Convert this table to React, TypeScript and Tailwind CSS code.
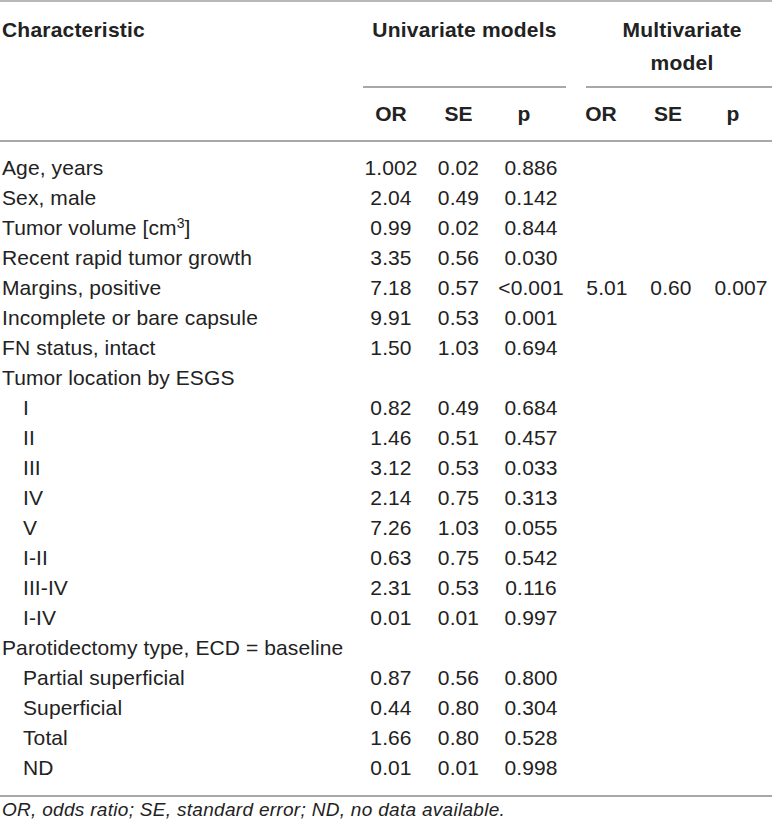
// Regression table: univariate and multivariate models.

type Row = {
	label: React.ReactNode;
	indent?: boolean;
	uni?: [string, string, string];
	multi?: [string, string, string];
};

const rows: Row[] = [
	{ label: "Age, years", uni: ["1.002", "0.02", "0.886"] },
	{ label: "Sex, male", uni: ["2.04", "0.49", "0.142"] },
	{
		label: (
			<>
				Tumor volume [cm<sup className="text-[14px] leading-none">3</sup>]
			</>
		),
		uni: ["0.99", "0.02", "0.844"],
	},
	{ label: "Recent rapid tumor growth", uni: ["3.35", "0.56", "0.030"] },
	{
		label: "Margins, positive",
		uni: ["7.18", "0.57", "<0.001"],
		multi: ["5.01", "0.60", "0.007"],
	},
	{ label: "Incomplete or bare capsule", uni: ["9.91", "0.53", "0.001"] },
	{ label: "FN status, intact", uni: ["1.50", "1.03", "0.694"] },
	{ label: "Tumor location by ESGS" },
	{ label: "I", indent: true, uni: ["0.82", "0.49", "0.684"] },
	{ label: "II", indent: true, uni: ["1.46", "0.51", "0.457"] },
	{ label: "III", indent: true, uni: ["3.12", "0.53", "0.033"] },
	{ label: "IV", indent: true, uni: ["2.14", "0.75", "0.313"] },
	{ label: "V", indent: true, uni: ["7.26", "1.03", "0.055"] },
	{ label: "I-II", indent: true, uni: ["0.63", "0.75", "0.542"] },
	{ label: "III-IV", indent: true, uni: ["2.31", "0.53", "0.116"] },
	{ label: "I-IV", indent: true, uni: ["0.01", "0.01", "0.997"] },
	{ label: "Parotidectomy type, ECD = baseline" },
	{ label: "Partial superficial", indent: true, uni: ["0.87", "0.56", "0.800"] },
	{ label: "Superficial", indent: true, uni: ["0.44", "0.80", "0.304"] },
	{ label: "Total", indent: true, uni: ["1.66", "0.80", "0.528"] },
	{ label: "ND", indent: true, uni: ["0.01", "0.01", "0.998"] },
];

const cols = "grid grid-cols-[355px_72px_63px_82px_70px_58px_72px]";

export default function App() {
	return (
		<div className="w-[772px] bg-white text-[#222] font-['Liberation_Sans',Arial,sans-serif]">
			<div className="border-t-2 border-[#b8b8b8]">
				{/* header */}
				<div className={`${cols} font-bold text-[21px] tracking-[0.2px]`}>
					<div className="h-[84px] pt-[11px] leading-[33px] pl-[2px]">
						Characteristic
					</div>
					<div className="col-span-3 ml-[8px] mr-[6px] h-[86px] pt-[11px] leading-[33px] text-center border-b-2 border-[#a8a8a8]">
						Univariate models
					</div>
					<div className="col-span-3 ml-[14px] h-[86px] pt-[11px] leading-[33px] text-center pl-[6px] border-b-2 border-[#a8a8a8]">
						Multivariate
						<br />
						model
					</div>
				</div>
				<div
					className={`${cols} h-[54px] items-center font-bold text-[21px] border-b-2 border-[#a8a8a8]`}
				>
					<div />
					<div className="text-center">OR</div>
					<div className="text-center">SE</div>
					<div className="text-center pr-[14px]">p</div>
					<div className="text-center pr-[12px]">OR</div>
					<div className="text-center pr-[6px]">SE</div>
					<div className="text-center pr-[6px]">p</div>
				</div>

				{/* body */}
				<div className="pt-[11px] pb-[12px] text-[21px] tracking-[0.1px]">
					{rows.map((r, i) => (
						// biome-ignore lint/suspicious/noArrayIndexKey: static rows
						<div key={i} className={`${cols} h-[30px] leading-[30px] whitespace-nowrap`}>
							<div className={r.indent ? "pl-[23px]" : "pl-[2px]"}>{r.label}</div>
							<div className="text-center">{r.uni?.[0]}</div>
							<div className="text-center">{r.uni?.[1]}</div>
							<div className="text-center">{r.uni?.[2]}</div>
							<div className="text-center">{r.multi?.[0]}</div>
							<div className="text-center">{r.multi?.[1]}</div>
							<div className="text-center pl-[10px]">{r.multi?.[2]}</div>
						</div>
					))}
				</div>

				<div className="border-t-2 border-[#a8a8a8] leading-[26px] italic text-[19px] tracking-[0.3px] pl-[2px]">
					OR, odds ratio; SE, standard error; ND, no data available.
				</div>
			</div>
		</div>
	);
}
